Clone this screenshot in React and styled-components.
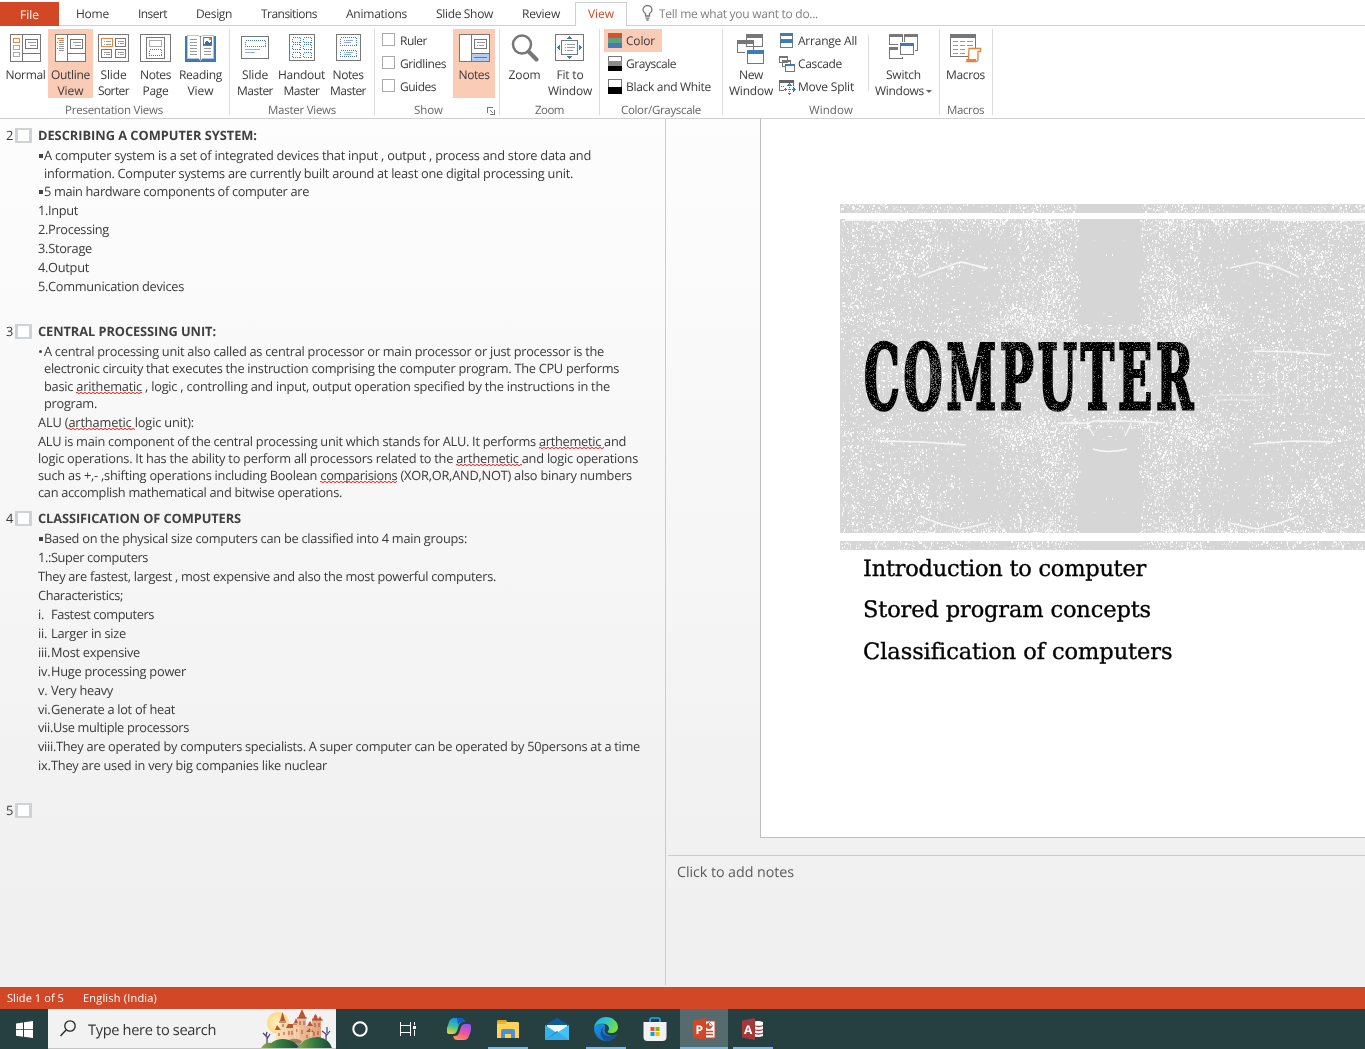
import React, { useLayoutEffect, useMemo, useRef, useState } from "react";
import styled, { createGlobalStyle, css } from "styled-components";

const GlobalStyle = createGlobalStyle`
  * { box-sizing: border-box; }
  body {
    margin: 0;
    overflow: hidden;
    font-family: "Open Sans", "Noto Sans", sans-serif;
    font-size: 12px;
    color: #3a3a3a;
    text-rendering: geometricPrecision;
  }
  svg { display: block; flex: none; }
`;

/* ---------- text fitted to a set width through its letter spacing ---------- */
const FitBox = styled.span`
  display: inline-block;
  flex: none;
  white-space: pre;
  width: ${(p) => p.$w}px;
  letter-spacing: ${(p) => p.$spacing}px;
`;

function Fit({ w, children }) {
  const inner = useRef(null);
  const [spacing, setSpacing] = useState(0);
  useLayoutEffect(() => {
    const el = inner.current;
    const natural = el.getBoundingClientRect().width;
    setSpacing((w - natural) / Math.max(1, el.textContent.length));
  }, [w]);
  return (
    <FitBox $w={w} $spacing={spacing}>
      <span ref={inner}>{children}</span>
    </FitBox>
  );
}

/* ---------- window ---------- */
const Window = styled.div`
  width: 1365px;
  height: 1049px;
  display: flex;
  flex-direction: column;
  background: #fff;
`;

/* ---------- tabs ---------- */
const TabBar = styled.nav`
  display: flex;
  height: 26px;
  padding-top: 2px;
  line-height: 23px;
  background: linear-gradient(#d0d0d0, #d0d0d0) 0 100% / 100% 1px no-repeat;
`;
const FileTab = styled.div`
  width: 59px;
  height: 24px;
  padding-left: 20px;
  line-height: 25px;
  background: #d24726;
  color: #fff;
`;
const Tab = styled.div`
  padding: 0 14.5px;
`;
const TabList = styled.div`
  display: flex;
  width: 516px;
  padding-left: 2.5px;
`;
const ActiveTab = styled.div`
  width: 52px;
  padding-left: 12px;
  border: 1px solid #d0d0d0;
  border-bottom: 0;
  background: #fff;
  color: #d24726;
  line-height: 22px;
`;
const TellMe = styled.div`
  display: flex;
  gap: 6px;
  padding-left: 15px;
  color: #808080;
`;

/* ---------- ribbon ---------- */
const Ribbon = styled.div`
  display: flex;
  height: 93px;
  border-bottom: 1px solid #d0d0d0;
  padding-top: 3px;
`;
const Group = styled.section`
  width: ${(p) => p.$w}px;
  height: 86px;
  display: flex;
  flex-direction: column;
  border-right: 1px solid #dcdcdc;
`;
const GroupBody = styled.div`
  display: flex;
  flex: none;
  height: 69px;
  padding-left: ${(p) => p.$pad}px;
`;
const GroupLabel = styled.div`
  display: flex;
  align-items: center;
  flex: none;
  height: 18px;
  padding: 7px 0 0 ${(p) => p.$pad}px;
  gap: 44px;
  color: #666;
  font-size: 11.5px;
  line-height: 16px;
`;
const BigButton = styled.div`
  width: ${(p) => p.$w}px;
  height: 69px;
  display: flex;
  flex-direction: column;
  align-items: center;
  padding-top: 5px;
  line-height: 16px;
  ${(p) => p.$on && css`background: #fbccb5;`}
`;
const BigIcon = styled.div`
  height: 33px;
  flex: none;
  display: flex;
  justify-content: center;
`;
const SmallList = styled.div`
  display: flex;
  flex-direction: column;
  width: ${(p) => p.$w}px;
`;
const SmallButton = styled.div`
  display: flex;
  align-items: center;
  height: 23px;
  width: ${(p) => p.$w || 90}px;
  padding-left: ${(p) => p.$pad || 0}px;
  gap: 4px;
  ${(p) => p.$on && css`background: #fbccb5;`}
`;
const CheckBox = styled.span`
  width: 13px;
  height: 13px;
  margin: -2px 1px 0 0;
  border: 1px solid #ababab;
  background: #fff;
`;
const InnerRule = styled.div`
  width: 1px;
  height: 56px;
  margin: 6px 5px 0 0;
  background: #dcdcdc;
`;
const Row = styled.div`
  display: flex;
  flex: none;
  align-items: center;
  height: 16px;
`;

/* ---------- icons of the ribbon ---------- */
function Icon({ w = 31, h = 29, children }) {
  return (
    <svg width={w} height={h} viewBox={`0 0 ${w} ${h}`} fill="none" stroke="#777" shapeRendering="crispEdges">
      {children}
    </svg>
  );
}
const NormalIcon = () => (
  <Icon>
    <path d="M.5.5h30v27H.5zM12.5.5v27M12.5 19.5h18M15.500 5.500h12v9h-12z" fill="#fff" />
    <path d="M18 8.500h8M20 11.500h6" stroke="#999" />
    <path d="M3.500 4.500h6v4h-6z" stroke="#e8843c" />
    <path d="M3.500 11.500h6v4h-6zM3.500 18.500h6v4h-6z" stroke="#aaa" />
  </Icon>
);
const OutlineIcon = () => (
  <Icon>
    <path d="M.5.5h30v27H.5zM12.5.5v27M12.5 19.500h18M15.500 5.500h12v9h-12z" fill="#fff" />
    <path d="M18 8.500h8M20 11.500h6" stroke="#999" />
    <path d="M2 4.500h7M4 6.500h5" stroke="#e8843c" />
    <path d="M2 8.500h1M4 8.500h5M4 10.500h5M4 12.500h5M2 14.500h1M4 14.500h5M4 16.500h5" stroke="#999" />
  </Icon>
);
const SorterIcon = () => (
  <Icon>
    <path d="M.5.5h30v27H.5zM17.500 4.500h10v8h-10zM3.500 15.500h10v8h-10zM17.500 15.500h10v8h-10z" fill="#fff" />
    <path d="M3.500 4.500h11v8h-11z" stroke="#e8843c" />
    <path d="M6 7.500h1M8 7.500h5M6 10.500h1M8 10.500h5M20 7.500h6M20 9.500h1M22 9.500h4M6 18.500h6M6 20.500h1M8 20.500h4M20 18.500h6M20 20.500h1M22 20.500h4" stroke="#999" />
  </Icon>
);
const NotesPageIcon = () => (
  <Icon>
    <path d="M.5.5h30v27H.5zM6.500 3.500h18v21h-18z" fill="#fff" />
    <path d="M9.500 6.500h12v6h-12z" stroke="#aaa" />
    <path d="M9.500 15.500h12v6h-12z" stroke="#3e7cb8" strokeDasharray="1 1" />
  </Icon>
);
const ReadingIcon = () => (
  <Icon>
    <path d="M.5 2.500h30v25H.5z" fill="#4279ae" stroke="#4279ae" />
    <path d="M2.500 1.500h11l2 2 2-2h11v23h-11l-2 2-2-2h-11z" fill="#fff" stroke="#b8c6d4" />
    <path d="M15.500 3v23M5 5.500h7M5 8.500h7M5 11.500h7M5 14.500h7M5 17.500h7M5 20.500h7M19 14.500h7M19 17.500h7M19 20.500h7" stroke="#999" />
    <path d="M18.500 3.500h8v8h-8z" fill="#fff" />
    <path d="M19 11l3-5 2 3 2-1v3z" fill="#3b6ea0" stroke="none" />
    <path d="M24 4h2v2h-2z" fill="#e8843c" stroke="none" />
  </Icon>
);
const SlideMasterIcon = () => (
  <Icon w={28}>
    <rect x=".5" y="2.500" width="27" height="22" rx="1" fill="#fff" />
    <path d="M4.500 6.500h20v6h-20z" stroke="#3e7cb8" strokeDasharray="1 1" />
    <path d="M4 15.500h15M4 18.500h10" stroke="#8fb0d6" />
  </Icon>
);
const HandoutIcon = () => (
  <Icon w={26}>
    <path d="M.5.5h25v26H.5z" fill="#fff" />
    <path d="M3.500 3.500h8v5h-8zM14.500 3.500h8v5h-8zM3.500 10.500h8v5h-8zM14.500 10.500h8v5h-8zM3.500 18.500h8v5h-8zM14.500 18.500h8v5h-8z" stroke="#3e7cb8" strokeDasharray="1 1" />
  </Icon>
);
const NotesMasterIcon = () => (
  <Icon w={25}>
    <path d="M.5.5h24v26H.5z" fill="#fff" />
    <path d="M4.500 3.500h16v8h-16zM4.500 16.500h16v6h-16z" stroke="#3e7cb8" strokeDasharray="1 1" />
    <path d="M8 6.500h1M10 6.500h7M8 8.500h7M8 18.500h1M10 18.500h7M8 20.500h7" stroke="#8fb0d6" />
  </Icon>
);
const NotesIcon = () => (
  <Icon>
    <path d="M.5.5h30v27H.5zM12.500.5v27M15.500 5.500h12v9h-12z" fill="#fff" />
    <path d="M13 20h17v7H13z" fill="#b5cdea" stroke="none" />
    <path d="M12.500 19.500h18" stroke="#3e7cb8" />
    <path d="M15 23.500h13" />
    <path d="M18 8.500h8M18 11.500h1M20 11.500h5" stroke="#999" />
  </Icon>
);
const MagnifierIcon = () => (
  <svg width="28" height="29" viewBox="0 0 28 29" fill="none" stroke="#777">
    <circle cx="11" cy="10.500" r="9" strokeWidth="2.500" />
    <path d="M17.500 17.500L25.500 25.500" strokeWidth="4" strokeLinecap="round" />
  </svg>
);
const FitIcon = () => (
  <Icon w={30}>
    <path d="M.5.5h28v26H.5zM6.500 6.500h16v14h-16z" fill="#fff" />
    <path d="M10 10.500h1M12 10.500h8M10 13.500h1M12 13.500h8M10 16.500h1M12 16.500h6" stroke="#999" />
    <path d="M14.500 2l2.500 3h-5zM14.500 25l2.500-3h-5zM2 13.500l3-2.500v5zM27 13.500l-3-2.500v5z" fill="#3e7cb8" stroke="none" />
  </Icon>
);
const SwatchIcon = ({ top, middle, bottom, outline, half }) => (
  <svg width="14" height="15" viewBox="0 0 14 15" shapeRendering="crispEdges">
    <rect width="14" height="15" fill={outline || top} />
    {outline && <rect x="1" y="1" width="12" height="13" fill={top} />}
    {!half && <rect y="5" width="14" height="5" fill={middle} />}
    <rect y={half ? 8 : 10} width="14" height={half ? 7 : 5} fill={bottom} />
  </svg>
);
const NewWindowIcon = () => (
  <svg width="28" height="31" viewBox="0 1 28 31" shapeRendering="crispEdges">
    <path d="M9.500 1.500h16v12h-16zM.5 7.500h16v12H.5zM10.500 18.500h16v12h-16z" fill="#fff" stroke="#777" />
    <path d="M9 1h17v4H9zM0 7h17v4H0z" fill="#777" />
    <path d="M9 17h18v4H9z" fill="#3e7cb8" />
    <path d="M8 17h2v4H8z" fill="#fff" />
  </svg>
);
const ArrangeIcon = () => (
  <svg width="15" height="15" viewBox="0 0 15 15" shapeRendering="crispEdges">
    <path d="M1.500.5h12v6h-12zM1.500 8.500h12v6h-12z" fill="#fff" stroke="#777" />
    <path d="M1 0h13v3H1zM1 7h13v3H1z" fill="#3e7cb8" />
  </svg>
);
const CascadeIcon = () => (
  <svg width="15" height="16" viewBox="0 0 15 16" overflow="visible" shapeRendering="crispEdges">
    <path d="M.5.5h8v6h-8zM3.500 4.500h8v6h-8z" fill="#fff" stroke="#777" />
    <path d="M0 0h9v2H0zM3 4h9v2H3z" fill="#777" />
    <path d="M6.500 8.500h9v7h-9z" fill="#fff" stroke="#777" />
    <path d="M6 8h10v2H6z" fill="#3e7cb8" />
  </svg>
);
const SplitIcon = () => (
  <svg width="15" height="16" viewBox="0 0 15 16" overflow="visible" shapeRendering="crispEdges">
    <path d="M.5 1.500h14v10H.5z" fill="#fff" stroke="#777" />
    <path d="M0 1h15v3H0z" fill="#666" />
    <path d="M5 6h11v10H5z" fill="#fff" />
    <path d="M2 7.500h4M14.500 4v4" stroke="#777" strokeDasharray="1 1" />
    <path d="M10.500 6v9M7 10.500h8" stroke="#3e7cb8" strokeDasharray="1 1" />
    <path d="M10.500 4l2.500 3H8zM10.500 16.500l2.500-3H8zM4.500 10.500L7 8v5zM16.500 10.500L14 8v5z" fill="#3e7cb8" />
  </svg>
);
const SwitchIcon = () => (
  <svg width="30" height="28" viewBox="0 0 30 28" shapeRendering="crispEdges">
    <path d="M.5.5h13v10H.5zM15.500.5h13v16h-13zM.5 13.500h13v11H.5z" fill="#fff" stroke="#777" />
    <path d="M0 0h14v3H0zM15 0h14v3H15zM0 13h14v3H0z" fill="#777" />
    <path d="M9 8h17v15H9z" fill="#fff" />
    <path d="M11.500 9.500h13v11h-13z" fill="#fff" stroke="#777" />
    <path d="M11 9h14v3H11z" fill="#3e7cb8" />
  </svg>
);
const MacrosIcon = () => (
  <svg width="32" height="29" viewBox="0 0 32 29">
    <path d="M.5.5h25v22H.5z" fill="#fff" stroke="#777" shapeRendering="crispEdges" />
    <path d="M0 0h26v4H0z" fill="#777" />
    <path d="M3 7.500h5M10 7.500h5M17 7.500h6M3 11.500h5M10 11.500h5M17 11.500h6M3 15.500h5M10 15.500h5M3 19.500h5M10 19.500h5" stroke="#999" shapeRendering="crispEdges" />
    <path d="M19 14.500h11.500v3H28v8.500q0 1.500-2 1.500h-9q1.500-1 1.500-3z" fill="#fff" stroke="#e8843c" strokeWidth="1.300" />
    <path d="M16 25h10v3H18q-2-1-2-3z" fill="#e8843c" />
  </svg>
);
const BulbIcon = () => (
  <svg width="11" height="22" viewBox="0 0 11 22" fill="none" stroke="#777" strokeWidth="1.300">
    <path d="M3.500 14v-2.500C1.800 10.300 1 9.200 1 8a4.500 4.500 0 019 0c0 1.200-.8 2.300-2.500 3.500V14zM3.500 16.200h4M4.300 18h2.400" />
  </svg>
);
const LauncherIcon = () => (
  <svg width="8" height="8" viewBox="0 0 8 8" fill="none" stroke="#777" shapeRendering="crispEdges">
    <path d="M.5 6V.5H6M3 3l3.500 3.500M7.500 3v4.500H3" />
  </svg>
);
const Caret = styled.span`
  border: 3px solid transparent;
  border-top-color: #666;
  border-bottom: 0;
  margin-left: 2px;
`;

function Big({ w, icon, on, lines, caret }) {
  return (
    <BigButton $w={w} $on={on}>
      <BigIcon>{icon}</BigIcon>
      {lines.map(([text, tw], i) => (
        <Row key={text}>
          <Fit w={tw}>{text}</Fit>
          {caret && i === lines.length - 1 && <Caret />}
        </Row>
      ))}
    </BigButton>
  );
}

/* ---------- work area ---------- */
const WorkArea = styled.div`
  display: flex;
  height: 868px;
  background: linear-gradient(#fdfdfd, #f0f0f0 90%);
`;
const OutlinePane = styled.aside`
  width: 666px;
  height: 866px;
  border-right: 1px solid #cdcdcd;
  padding: 8px 0 0 6px;
  font-size: 12.8px;
  line-height: 17px;
`;
const OutlineRow = styled.div`
  display: flex;
  align-items: center;
  height: 17px;
  margin-top: ${(p) => p.$gap || 0}px;
  padding-left: ${(p) => p.$indent || 0}px;
`;
const Heading = styled.div`
  display: flex;
  align-items: center;
  height: 17px;
  margin-top: ${(p) => p.$gap || 0}px;
  strong { font-weight: 700; color: #404040; }
`;
const SlideNumber = styled.span`
  width: 9px;
`;
const SlideThumb = styled.span`
  width: 17px;
  height: 15px;
  margin-right: 6px;
  border: 3px solid #d0d3d6;
  border-width: 2px 3px;
  background: #fff;
`;
const Marker = styled.span`
  width: ${(p) => p.$w}px;
  letter-spacing: -0.2px;
`;
const SquareBullet = styled.span`
  width: 4px;
  height: 4px;
  margin: 0 1px;
  background: #444;
`;
const RoundBullet = styled.span`
  width: 3px;
  height: 3px;
  margin: 0 2px 0 1px;
  border-radius: 50%;
  background: #444;
`;
const Misspelt = styled.span`
  background:
    repeating-linear-gradient(90deg, #f0413c 0 2px, #f0413c33 2px 4px) 0 calc(100% - 2px) / 100% 1px no-repeat,
    repeating-linear-gradient(90deg, #f0413c33 0 2px, #f0413c 2px 4px) 0 calc(100% - 1px) / 100% 1px no-repeat;
`;

const M = (t) => <Misspelt>{t}</Misspelt>;
const outline = [
  { n: 2, text: "DESCRIBING A COMPUTER SYSTEM:", w: 219 },
  { gap: 3, b: "sq", w: 547, text: "A computer system is a set of integrated devices that input , output , process and store data and" },
  { gap: 1, in: 6, w: 529, text: "information. Computer systems are currently built around at least one digital processing unit." },
  { gap: 1, b: "sq", w: 265, text: "5 main hardware components of computer are" },
  { gap: 2, w: 40, text: "1.Input" },
  { gap: 2, w: 71, text: "2.Processing" },
  { gap: 2, w: 54, text: "3.Storage" },
  { gap: 2, w: 51, text: "4.Output" },
  { gap: 2, w: 146, text: "5.Communication devices" },
  { n: 3, gap: 28, w: 178, text: "CENTRAL PROCESSING UNIT:" },
  { gap: 3, b: "dot", w: 560, text: "A central processing unit also called as central processor or main processor or just processor is the" },
  { gap: 0, in: 6, w: 575, text: "electronic circuity that executes the instruction comprising the computer program. The CPU performs" },
  { gap: 1, in: 6, w: 566, text: <>basic {M("arithematic")} , logic , controlling and input, output operation specified by the instructions in the</> },
  { gap: 0, in: 6, w: 53, text: "program." },
  { gap: 2, w: 156, text: <>ALU ({M("arthametic ")}logic unit):</> },
  { gap: 2, w: 588, text: <>ALU is main component of the central processing unit which stands for ALU. It performs {M("arthemetic ")}and</> },
  { gap: 0, w: 600, text: <>logic operations. It has the ability to perform all processors related to the {M("arthemetic ")}and logic operations</> },
  { gap: 0, w: 594, text: <>such as +,- ,shifting operations including Boolean {M("comparisions")} (XOR,OR,AND,NOT) also binary numbers</> },
  { gap: 0, w: 304, text: "can accomplish mathematical and bitwise operations." },
  { n: 4, gap: 9, w: 203, text: "CLASSIFICATION OF COMPUTERS" },
  { gap: 3, b: "sq", w: 423, text: "Based on the physical size computers can be classified into 4 main groups:" },
  { gap: 2, w: 110, text: "1.:Super computers" },
  { gap: 2, w: 458, text: "They are fastest, largest , most expensive and also the most powerful computers." },
  { gap: 2, w: 85, text: "Characteristics;" },
  { gap: 2, m: "i.", w: 103, text: "Fastest computers" },
  { gap: 2, m: "ii.", w: 75, text: "Larger in size" },
  { gap: 2, m: "iii.", w: 89, text: "Most expensive" },
  { gap: 2, m: "iv.", w: 135, text: "Huge processing power" },
  { gap: 2, m: "v.", w: 62, text: "Very heavy" },
  { gap: 2, m: "vi.", w: 124, text: "Generate a lot of heat" },
  { gap: 1, w: 151, text: "vii.Use multiple processors" },
  { gap: 2, w: 602, text: "viii.They are operated by computers specialists. A super computer can be operated by 50persons at a time" },
  { gap: 2, m: "ix.", w: 276, text: "They are used in very big companies like nuclear" },
  { n: 5, gap: 28, w: 1, text: "" },
];

function OutlineLine({ line }) {
  if (line.n) {
    return (
      <Heading $gap={line.gap}>
        <SlideNumber>{line.n}</SlideNumber>
        <SlideThumb />
        <strong>{line.text && <Fit w={line.w}>{line.text}</Fit>}</strong>
      </Heading>
    );
  }
  return (
    <OutlineRow $gap={line.gap} $indent={32 + (line.in || 0)}>
      {line.b === "sq" && <SquareBullet />}
      {line.b === "dot" && <RoundBullet />}
      {line.m && <Marker $w={13}>{line.m}</Marker>}
      <Fit w={line.w}>{line.text}</Fit>
    </OutlineRow>
  );
}

/* ---------- slide ---------- */
const EditorPane = styled.main`
  flex: 1;
  display: flex;
  flex-direction: column;
  min-width: 0;
`;
const SlideCanvas = styled.div`
  height: 737px;
  margin-left: 2px;
  padding-left: 92px;
  border-bottom: 1px solid #cdcdcd;
`;
const Slide = styled.article`
  width: 605px;
  height: 719px;
  padding: 85px 0 0 79px;
  border: 1px solid #bebebe;
  border-width: 0 0 1px 1px;
  background: #fff;
  overflow: hidden;
`;
const Band = styled.div`
  position: relative;
  height: ${(p) => p.$h}px;
  margin-bottom: ${(p) => p.$gap || 0}px;
  background: #d6d6d6;
  overflow: hidden;
`;
const TitleRow = styled.div`
  position: absolute;
  left: 24px;
  top: 111px;
`;
const Title = styled.h1`
  margin: 0;
  font: 700 90px/96px "DejaVu Serif Condensed", "DejaVu Serif", serif;
  color: #000;
  letter-spacing: 7px;
  -webkit-text-stroke: 3px #000;
  white-space: nowrap;
  display: inline-block;
  transform-origin: 0 0;
  transform: scaleX(${(p) => p.$scale});
`;
const TextureLayer = styled.div`
  position: absolute;
  left: 0;
  top: 0;
  mix-blend-mode: ${(p) => p.$blend || "normal"};
`;
const Subtitle = styled.div`
  padding: 0 0 0 23px;
  margin-top: -1px;
  font: 22.5px/41.4px "DejaVu Serif", serif;
  color: #000;
  -webkit-text-stroke: 0.35px #000;
`;
const NotesPane = styled.div`
  padding: 7px 0 0 11px;
  font-size: 14.3px;
  line-height: 20px;
  color: #5c5c5c;
`;

function random(seed) {
  let a = seed;
  return () => {
    a = (a + 0x6d2b79f5) | 0;
    let t = Math.imul(a ^ (a >>> 15), 1 | a);
    t = (t + Math.imul(t ^ (t >>> 7), 61 | t)) ^ t;
    return ((t ^ (t >>> 14)) >>> 0) / 4294967296;
  };
}
const lattice = (() => {
  const rnd = random(91);
  return Array.from({ length: 4096 }, rnd);
})();
function smoothNoise(x, y) {
  const xi = Math.floor(x);
  const yi = Math.floor(y);
  const fx = x - xi;
  const fy = y - yi;
  const at = (i, j) => lattice[(i & 63) + (j & 63) * 64];
  const top = at(xi, yi) * (1 - fx) + at(xi + 1, yi) * fx;
  const low = at(xi, yi + 1) * (1 - fx) + at(xi + 1, yi + 1) * fx;
  return top * (1 - fy) + low * fy;
}
const blob = (u, v, cu, cv, ru, rv) => Math.exp(-(((u - cu) / ru) ** 2) - ((v - cv) / rv) ** 2);

/* amount of wear at a point, given its distance from the two mirror axes */
function wear(u, v) {
  if (u < 28 + smoothNoise(7, v / 6) * 6 && v > 52) return v < 66 ? 0.01 : 0.001;
  let d = 0.07;
  d += 0.2 * blob(u, v, 80, 60, 38, 24);
  d += 0.16 * blob(u, v, 60, 152, 34, 14);
  d += 0.1 * blob(u, v, 130, 158, 60, 12);
  d += 0.09 * blob(u, v, 52, 90, 24, 26);
  d += 0.05 * blob(u, v, 245, 110, 40, 70);
  d += 0.08 * blob(u, v, 200, 118, 40, 10);
  d += 0.13 * blob(u, v, 180, 5, 34, 14);
  d += 0.1 * blob(u, v, 230, 150, 50, 12);
  d -= 0.065 * blob(u, v, 140, 88, 32, 40);
  d -= 0.05 * blob(u, v, 125, 20, 25, 18);
  d -= 0.06 * blob(u, v, 132, 130, 24, 14);
  d -= 0.05 * blob(u, v, 242, 128, 10, 18);
  const patches = 0.25 + 1.5 * smoothNoise(u / 9, v / 11);
  const streaks = 0.5 + smoothNoise(u / 1.5, v / 12 + 20);
  return Math.max(0.008, d) * patches * streaks;
}

function specks({ width, height, cx, cy, seed, scale, fine, offset = 0 }) {
  const rnd = random(seed);
  let d = "";
  const u1 = Math.max(cx, width - cx);
  for (let u = 0; u < u1; u += 1) {
    for (let v = 0; v <= cy; v += 1) {
      if (rnd() < wear(u, v + offset) * scale) {
        const tall = !fine && rnd() > 0.5 ? 2 : 1;
        const wide = !fine && rnd() > 0.8 ? 2 : 1;
        [cx - u, cx + u].forEach((x) => {
          if (x < 0 || x > width) return;
          d += `M${x} ${cy - v}h${wide}v${tall}h-${wide}z`;
          if (rnd() > 0.12) d += `M${x} ${cy + v}h${wide}v${tall}h-${wide}z`;
        });
      }
    }
  }
  return d;
}

function Texture({ height, cy, seed, offset }) {
  const [bright, faint] = useMemo(() => {
    const base = { width: 525, height, cx: 269, cy, offset };
    return [specks({ ...base, seed, scale: 0.52 }), specks({ ...base, seed: seed + 1, scale: 0.7 })];
  }, [height, cy, seed, offset]);
  return (
    <svg width="525" height={height} viewBox={`0 0 525 ${height}`} shapeRendering="crispEdges">
      <path d={faint} fill="#e7e7e7" />
      <path d={bright} fill="#fafafa" />
    </svg>
  );
}
const Scratches = () => (
  <svg width="525" height="314" viewBox="0 0 525 314" fill="none" stroke="#f6f6f6" strokeWidth="1.400">
    <path d="M78 58l22-8 20-7 28 6M123 43l24 7M390 49l27-6 20 5 22 10" />
    <path d="M81 298l20 7 20 5 27-6M390 304l27 6 20-5 22-8" />
    <path d="M413 132l42 1 36 3M42 222l40 1 44 3M413 225l40-3 40 1" />
    <path d="M218 204h30l6-2h30l40 2M247 205l7 12M291 205l-6 12M253 230q14 5 34 0M263 203q6-3 12 0" />
    <path d="M108 100v8M430 100v8M370 176h60M376 181h40M108 22v10M429 22v10" strokeWidth="1" opacity=".7" />
    <path d="M5 1h62M430 1h95" strokeWidth="2" />
  </svg>
);
function TitleWear() {
  const [dim, light] = useMemo(() => {
    const base = { width: 525, height: 314, cx: 269, cy: 157, fine: true };
    return [specks({ ...base, seed: 77, scale: 2.2 }), specks({ ...base, seed: 31, scale: 0.6 })];
  }, []);
  return (
    <svg width="525" height="314" viewBox="0 0 525 314" shapeRendering="crispEdges">
      <path d={dim} fill="#404040" />
      <path d={light} fill="#888" />
      <path d="M98 140l18-4M120 134l22 4" stroke="#999" />
    </svg>
  );
}
function SlideTitle({ width, children }) {
  const ref = useRef(null);
  const [scale, setScale] = useState(0.55);
  useLayoutEffect(() => setScale(width / ref.current.offsetWidth), [width]);
  return <Title ref={ref} $scale={scale}>{children}</Title>;
}

/* ---------- status bar and taskbar ---------- */
const StatusBar = styled.footer`
  display: flex;
  gap: 19px;
  height: 22px;
  padding-left: 7px;
  line-height: 23px;
  font-size: 11px;
  background: #d24726;
  color: #fff;
`;
const Taskbar = styled.div`
  display: flex;
  height: 40px;
  background: #263f41;
`;
const StartButton = styled.div`
  width: 48px;
  display: flex;
  align-items: center;
  justify-content: center;
`;
const SearchBox = styled.div`
  display: flex;
  align-items: center;
  width: 288px;
  height: 40px;
  padding-left: 12px;
  gap: 12px;
  border-bottom: 1px solid #c4c4c4;
  background: #f2f2f2;
  color: #333;
  font-size: 14.6px;
  line-height: 22px;
  margin-right: 1px;
`;
const SearchLabel = styled.span`
  padding-top: 2px;
`;
const SearchArt = styled.div`
  margin-left: 33px;
  height: 39px;
`;
const TaskButton = styled.div`
  width: 48px;
  height: 40px;
  margin-right: 1px;
  display: flex;
  align-items: center;
  justify-content: center;
  background:
    linear-gradient(#76b9ed, #76b9ed) 50% 100% / ${(p) => (p.$on ? 48 : p.$open ? 40 : 0)}px 2px no-repeat,
    ${(p) => (p.$on ? "#566b6d" : "transparent")};
`;

const WindowsLogo = () => (
  <svg width="17" height="17" viewBox="0 0 17 17" fill="#fff">
    <path d="M0 2.500l7-1v6.700H0zM8 1.300L17 0v8.200H8zM0 9h7v6.700l-7-1zM8 9h9v8l-9-1.200z" />
  </svg>
);
const SearchIcon = () => (
  <svg width="16" height="17" viewBox="0 0 16 17" fill="none" stroke="#222" strokeWidth="1.300">
    <circle cx="10" cy="6" r="5.200" />
    <path d="M6 10L.5 16" />
  </svg>
);
const Castle = () => (
  <svg width="72" height="39" viewBox="0 0 72 39">
    <defs>
      <linearGradient id="hill" x2="1" y2="0">
        <stop stopColor="#8cae45" /><stop offset=".5" stopColor="#327a42" /><stop offset="1" stopColor="#174d38" />
      </linearGradient>
      <linearGradient id="wall" x2="1" y2="0">
        <stop stopColor="#ffe1b8" /><stop offset="1" stopColor="#dfa07c" />
      </linearGradient>
      <radialGradient id="sun"><stop stopColor="#fff3c4" /><stop offset="1" stopColor="#ffd98a" /></radialGradient>
    </defs>
    <circle cx="17" cy="14" r="11" fill="url(#sun)" />
    <path d="M15 34V21h4v-9h5v7h8v-4h4V9h9v8h6v-8h9v22l-3 3H18z" fill="url(#wall)" />
    <path d="M19 12l2.500-9 3 9zM14 21l2-5 4 5zM25 19l2-4h5v4zM37 9l4-9 4 9zM33 14l2-5 2 5zM46 17l3-5 3 5zM52 11l1-4 1.500-2L56 7l1 4zM57 11l2-4 2 4zM45 23l4-4 4 4z" fill="#b75732" />
    <path d="M36 9h10M32 15h4M18 13h7M51 11h11" stroke="#a3472c" strokeWidth="1.200" />
    <path d="M22 15v3M18 24v3M23 23v3M28 22v4M31 22v4M39 12v4M43 12v4M41 21v4M46 26v3M54 14v4M58 14v4M57 22v4M53 23v4M36 20v3" stroke="#9d4b38" strokeWidth="1" />
    <path d="M25 32V20M34 32V16M37 30V18M50 31V19" stroke="#fbe0bc" strokeWidth="1" />
    <path d="M6 36V28l-4-4M6 30l3-5M5 27l1-4M65 33v-8l-4-3M65 27l4-5M66 24v-6" stroke="#4d3c6d" strokeWidth="1.200" fill="none" />
    <path d="M0 39q4-6 10-5 8-6 18-3 7 2 10 8z" fill="url(#hill)" />
    <path d="M36 39q8-12 22-11 10 2 13 11z" fill="url(#hill)" />
    <path d="M28 31q6-3 13 1l-4 7q-2-5-9-8z" fill="#3c3a2b" opacity=".5" />
  </svg>
);
const Ring = () => (
  <svg width="18" height="18" viewBox="0 0 18 18" fill="none"><circle cx="8" cy="9" r="6.700" stroke="#fff" strokeWidth="2" /></svg>
);
const TaskViewIcon = () => (
  <svg width="20" height="17" viewBox="0 0 20 17" fill="none" stroke="#fff" shapeRendering="crispEdges">
    <path d="M.5 1v3.500h10V1M.5 15v-3.500h10V15M.5 4.500v7M10.500 4.500v7M14.500 1v3M14.500 9v6" />
    <path d="M13 5h3v3h-3z" fill="#fff" stroke="none" />
  </svg>
);
const CopilotIcon = () => (
  <svg width="24" height="22" viewBox="0 0 24 22">
    <defs>
      <linearGradient id="cpl" x1=".5" x2=".2" y2="1"><stop stopColor="#168df0" /><stop offset=".5" stopColor="#3cc09c" /><stop offset="1" stopColor="#f5d22c" /></linearGradient>
      <linearGradient id="cpr" x1=".7" x2=".3" y2="1"><stop stopColor="#9554f5" /><stop offset=".55" stopColor="#f0569a" /><stop offset="1" stopColor="#ff9552" /></linearGradient>
    </defs>
    <path d="M7 0h7c2 0 3 1 4 4h-2c-2 0-3 1-4 3l-2 6c-1 2-2 3-4 3H3c-3 0-4-2-3-6l2-6C3 1 5 0 7 0z" fill="url(#cpl)" />
    <path d="M17 22h-7c-2 0-3-1-4-4h2c2 0 3-1 4-3l2-6c1-2 2-3 4-3h3c3 0 4 2 3 6l-2 6c-1 3-3 4-5 4z" fill="url(#cpr)" />
    <path d="M10 0h4c2 0 3 1 4 4h-3c-2 0-3 1-4 3z" fill="#1857c8" />
  </svg>
);
const FolderIcon = () => (
  <svg width="22" height="19" viewBox="0 0 22 19">
    <path d="M0 1q0-1 1-1h8l2 3H0z" fill="#e5a418" />
    <path d="M0 2h20q2 0 2 1v15H0z" fill="#ffd35c" />
    <path d="M0 2h10l-2 2H0z" fill="#eeb52f" />
    <path d="M4 18v-7q0-2 2-2h10q2 0 2 2v7h-4v-4H8v4z" fill="#4b91d0" />
  </svg>
);
const MailIcon = () => (
  <svg width="24" height="23" viewBox="0 0 24 23">
    <path d="M0 7l12-7 12 7v3H0z" fill="#105a9c" />
    <path d="M2 7h20v8H2z" fill="#f4fbff" />
    <path d="M0 7l12 8 12-8v15H0z" fill="#31b3ef" />
    <path d="M0 22l12-9 12 9z" fill="#1b86d3" />
    <path d="M24 7L0 22h24z" fill="#55cdf5" opacity=".55" />
  </svg>
);
const EdgeIcon = () => (
  <svg width="24" height="24" viewBox="0 0 24 24">
    <defs>
      <linearGradient id="edgeTop" x2="1" y2=".4"><stop stopColor="#1dabe0" /><stop offset=".55" stopColor="#31c7c5" /><stop offset="1" stopColor="#70df45" /></linearGradient>
      <linearGradient id="edgeLow" x2="1" y2="1"><stop stopColor="#1c93e2" /><stop offset="1" stopColor="#0f63b8" /></linearGradient>
    </defs>
    <path d="M0 11c0 7 5 13 12 13 5 0 9-3 11-7-3 2-6 2-8 1-4-1-5-4-4-7 .5-2 0-4-3-4-4 0-7 2-8 4z" fill="url(#edgeLow)" />
    <path d="M0 11C1 4 6 0 12 0c7 0 12 5 12 10 0 4-3 6-7 6-3 0-4-1-3-2 2-2 1-6-3-7C7 6 2 7 0 11z" fill="url(#edgeTop)" />
    <path d="M11 9c-4 3-3 9 3 10 4 1 7-1 9-2-1 4-5 7-10 7-7-2-9-11-2-15z" fill="#155195" />
  </svg>
);
const StoreIcon = () => (
  <svg width="24" height="24" viewBox="0 0 24 24">
    <path d="M7 7V3q0-2 2-2h6q2 0 2 2v4" fill="none" stroke="#28a8ea" strokeWidth="1.700" />
    <path d="M.5 5h23v15q0 4-4 4h-15q-4 0-4-4z" fill="#f2f2f2" />
    <path d="M7.500 10h4v4h-4z" fill="#f04f25" /><path d="M12.500 10h4v4h-4z" fill="#7eb900" />
    <path d="M7.500 15h4v4h-4z" fill="#00a3ee" /><path d="M12.500 15h4v4h-4z" fill="#fdb900" />
  </svg>
);
const AppGlyph = styled.text`
  font: 700 12px "Open Sans", sans-serif;
  fill: #fff;
`;
const PowerPointIcon = () => (
  <svg width="24" height="22" viewBox="0 0 24 22">
    <path d="M12 3h11v17H12z" fill="#fff" stroke="#d24726" />
    <circle cx="17" cy="8" r="3" fill="#d24726" />
    <path d="M17 8V4l4 4z" fill="#fff" stroke="#d24726" strokeWidth=".6" />
    <path d="M14 13.500h7M14 16.500h7" stroke="#d24726" strokeWidth="1.300" />
    <path d="M1 2.500L14 0v22L1 19.500z" fill="#d24726" />
    <AppGlyph x="3.500" y="15.500">P</AppGlyph>
  </svg>
);
const AccessIcon = () => (
  <svg width="24" height="22" viewBox="0 0 24 22">
    <path d="M12 4q5-2 10 0v14q-5 2-10 0z" fill="#fff" />
    <path d="M13 7.500q5 2 9 0M13 11.500q5 2 9 0M13 15q5 2 9 0" stroke="#a4373a" strokeWidth="1.300" fill="none" />
    <path d="M1 2.500L14 0v22L1 19.500z" fill="#a4373a" />
    <AppGlyph x="3" y="15.500">A</AppGlyph>
  </svg>
);

const tabs = [["Home", 33], ["Insert", 29], ["Design", 36], ["Transitions", 56], ["Animations", 61], ["Slide Show", 57], ["Review", 38]];

export default function App() {
  return (
    <Window>
      <GlobalStyle />
      <TabBar>
        <FileTab><Fit w={19}>File</Fit></FileTab>
        <TabList>
          {tabs.map(([name, w]) => <Tab key={name}><Fit w={w}>{name}</Fit></Tab>)}
        </TabList>
        <ActiveTab><Fit w={26}>View</Fit></ActiveTab>
        <TellMe><BulbIcon /><Fit w={159}>Tell me what you want to do...</Fit></TellMe>
      </TabBar>

      <Ribbon>
        <Group $w={230}>
          <GroupBody $pad={3}>
            <Big w={45} icon={<NormalIcon />} lines={[["Normal", 40]]} />
            <Big w={45} on icon={<OutlineIcon />} lines={[["Outline", 39], ["View", 26]]} />
            <Big w={41} icon={<SorterIcon />} lines={[["Slide", 26], ["Sorter", 31]]} />
            <Big w={43} icon={<NotesPageIcon />} lines={[["Notes", 31], ["Page", 26]]} />
            <Big w={47} icon={<ReadingIcon />} lines={[["Reading", 43], ["View", 26]]} />
          </GroupBody>
          <GroupLabel $pad={65}><Fit w={98}>Presentation Views</Fit></GroupLabel>
        </Group>
        <Group $w={145}>
          <GroupBody $pad={4}>
            <Big w={42} icon={<SlideMasterIcon />} lines={[["Slide", 26], ["Master", 36]]} />
            <Big w={51} icon={<HandoutIcon />} lines={[["Handout", 47], ["Master", 36]]} />
            <Big w={42} icon={<NotesMasterIcon />} lines={[["Notes", 31], ["Master", 36]]} />
          </GroupBody>
          <GroupLabel $pad={38}><Fit w={68}>Master Views</Fit></GroupLabel>
        </Group>
        <Group $w={125}>
          <GroupBody $pad={7}>
            <SmallList $w={71}>
              <SmallButton $w={70}><CheckBox /><Fit w={27}>Ruler</Fit></SmallButton>
              <SmallButton $w={70}><CheckBox /><Fit w={46}>Gridlines</Fit></SmallButton>
              <SmallButton $w={70}><CheckBox /><Fit w={36}>Guides</Fit></SmallButton>
            </SmallList>
            <Big w={42} on icon={<NotesIcon />} lines={[["Notes", 31]]} />
          </GroupBody>
          <GroupLabel $pad={39}><Fit w={29}>Show</Fit><LauncherIcon /></GroupLabel>
        </Group>
        <Group $w={100}>
          <GroupBody $pad={3}>
            <Big w={43} icon={<MagnifierIcon />} lines={[["Zoom", 32]]} />
            <Big w={48} icon={<FitIcon />} lines={[["Fit to", 27], ["Window", 44]]} />
          </GroupBody>
          <GroupLabel $pad={35}><Fit w={29}>Zoom</Fit></GroupLabel>
        </Group>
        <Group $w={123}>
          <GroupBody $pad={4}>
            <SmallList $w={112}>
              <SmallButton $w={58} $pad={4} $on><SwatchIcon top="#d35230" middle="#5fa283" bottom="#4a7ab5" /><Fit w={29}>Color</Fit></SmallButton>
              <SmallButton $w={112} $pad={4}><SwatchIcon outline="#777" top="#fff" middle="#8c8c8c" bottom="#000" /><Fit w={50}>Grayscale</Fit></SmallButton>
              <SmallButton $w={112} $pad={4}><SwatchIcon half outline="#777" top="#fff" bottom="#000" /><Fit w={85}>Black and White</Fit></SmallButton>
            </SmallList>
          </GroupBody>
          <GroupLabel $pad={21}><Fit w={80}>Color/Grayscale</Fit></GroupLabel>
        </Group>
        <Group $w={217}>
          <GroupBody $pad={5}>
            <Big w={46} icon={<NewWindowIcon />} lines={[["New", 24], ["Window", 44]]} />
            <SmallList $w={94}>
              <SmallButton $pad={5}><ArrangeIcon /><Fit w={59}>Arrange All</Fit></SmallButton>
              <SmallButton $pad={5}><CascadeIcon /><Fit w={44}>Cascade</Fit></SmallButton>
              <SmallButton $pad={5}><SplitIcon /><Fit w={56}>Move Split</Fit></SmallButton>
            </SmallList>
            <InnerRule />
            <Big w={59} caret icon={<SwitchIcon />} lines={[["Switch", 35], ["Windows", 49]]} />
          </GroupBody>
          <GroupLabel $pad={86}><Fit w={44}>Window</Fit></GroupLabel>
        </Group>
        <Group $w={53}>
          <GroupBody $pad={5}>
            <Big w={41} icon={<MacrosIcon />} lines={[["Macros", 39]]} />
          </GroupBody>
          <GroupLabel $pad={7}><Fit w={37}>Macros</Fit></GroupLabel>
        </Group>
      </Ribbon>

      <WorkArea>
        <OutlinePane>
          {outline.map((line, i) => <OutlineLine key={i} line={line} />)}
        </OutlinePane>
        <EditorPane>
          <SlideCanvas>
            <Slide>
              <Band $h={9} $gap={6}><Texture height={9} cy={9} seed={11} offset={132} /></Band>
              <Band $h={314} $gap={8}>
                <TextureLayer><Texture height={314} cy={157} seed={5} /></TextureLayer>
                <TextureLayer><Scratches /></TextureLayer>
                <TitleRow><SlideTitle width={333}>COMPUTER</SlideTitle></TitleRow>
                <TextureLayer $blend="lighten"><TitleWear /></TextureLayer>
              </Band>
              <Band $h={9}><Texture height={9} cy={9} seed={23} offset={132} /></Band>
              <Subtitle>
                <div><Fit w={283}>Introduction to computer</Fit></div>
                <div><Fit w={288}>Stored program concepts</Fit></div>
                <div><Fit w={309}>Classification of computers</Fit></div>
              </Subtitle>
            </Slide>
          </SlideCanvas>
          <NotesPane><Fit w={117}>Click to add notes</Fit></NotesPane>
        </EditorPane>
      </WorkArea>

      <StatusBar><Fit w={57}>Slide 1 of 5</Fit><Fit w={74}>English (India)</Fit></StatusBar>
      <Taskbar>
        <StartButton><WindowsLogo /></StartButton>
        <SearchBox>
          <SearchIcon />
          <SearchLabel><Fit w={128}>Type here to search</Fit></SearchLabel>
          <SearchArt><Castle /></SearchArt>
        </SearchBox>
        <TaskButton><Ring /></TaskButton>
        <TaskButton><TaskViewIcon /></TaskButton>
        <TaskButton><CopilotIcon /></TaskButton>
        <TaskButton $open><FolderIcon /></TaskButton>
        <TaskButton><MailIcon /></TaskButton>
        <TaskButton $open><EdgeIcon /></TaskButton>
        <TaskButton><StoreIcon /></TaskButton>
        <TaskButton $on><PowerPointIcon /></TaskButton>
        <TaskButton $open><AccessIcon /></TaskButton>
      </Taskbar>
    </Window>
  );
}
